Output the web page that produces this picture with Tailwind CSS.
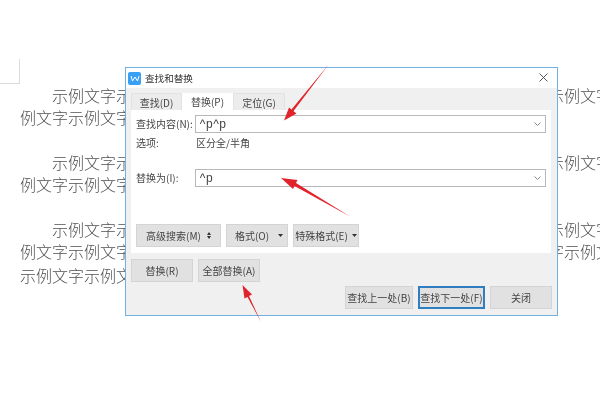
<!DOCTYPE html>
<html lang="zh">
<head>
<meta charset="utf-8">
<script src="https://cdn.jsdelivr.net/npm/@tailwindcss/browser@4"></script>
</head>
<body>
<div class="relative w-[600px] h-[408px] overflow-hidden bg-white font-['Noto_Sans_CJK_SC','Liberation_Sans',sans-serif] blur-[0.3px]">
  <!-- document page -->
  <div class="w-[20px] h-[25px] mt-[59px] border-r border-b border-[#dcdcdc]"></div>
  <div class="pl-[20px] text-[16px] leading-[22px] text-[#505050] font-light whitespace-nowrap">
    <div class="flex">
      <div class="w-[105px] overflow-hidden pl-[32px]">示例文字示</div>
      <div class="ml-[433px] w-[42px] overflow-hidden"><div class="-ml-[10px]">示例文字</div></div>
    </div>
    <div class="flex">
      <div class="w-[105px] overflow-hidden">例文字示例文字</div>
    </div>
    <div class="flex mt-[23px]">
      <div class="w-[105px] overflow-hidden pl-[32px]">示例文字示</div>
      <div class="ml-[433px] w-[42px] overflow-hidden"><div class="-ml-[10px]">示例文字</div></div>
    </div>
    <div class="flex">
      <div class="w-[105px] overflow-hidden">例文字示例文字</div>
    </div>
    <div class="flex mt-[23px]">
      <div class="w-[105px] overflow-hidden pl-[32px]">示例文字示</div>
      <div class="ml-[433px] w-[42px] overflow-hidden"><div class="-ml-[10px]">示例文字</div></div>
    </div>
    <div class="flex">
      <div class="w-[105px] overflow-hidden">例文字示例文字</div>
      <div class="ml-[433px] w-[42px] overflow-hidden"><div class="-ml-[10px]">字示例文</div></div>
    </div>
    <div class="flex mt-[2px]">
      <div class="w-[105px] overflow-hidden">示例文字示例文字</div>
    </div>
  </div>

  <!-- dialog -->
  <div class="absolute left-[125px] top-[67px] w-[433px] h-[249px] border border-[#6fb1e2] bg-white flex flex-col text-[10px] text-[#444]">
    <div class="h-[20px] shrink-0 flex items-center pl-[2px] pr-[9px]">
      <div class="w-[13px] h-[13px] rounded-[2px] bg-[#3aa0f5] flex items-center justify-center">
        <svg width="10" height="7" viewBox="0 0 10 7" fill="none" stroke="#fff" stroke-width="1"><path d="M1 1l1.5 5L5 2l2.5 4L9 1"/></svg>
      </div>
      <span class="ml-[4px] text-[#333] text-[9.6px]">查找和替换</span>
      <svg class="ml-auto mb-[2px]" width="9" height="9" viewBox="0 0 9 9" stroke="#444" stroke-width="0.9"><path d="M0.5 0.5l8 8M8.5 0.5l-8 8"/></svg>
    </div>
    <div class="flex-1 bg-[#f0f0f0] px-[5px] flex flex-col">
      <div class="flex pt-[5px] h-[22px] shrink-0">
        <div class="w-[51px] bg-[#ececec] border border-b-0 border-[#e2e2e2] flex items-center justify-center">查找(D)</div>
        <div class="w-[51px] bg-white flex items-center justify-center">替换(P)</div>
        <div class="w-[52px] bg-[#ececec] border border-b-0 border-[#e2e2e2] flex items-center justify-center">定位(G)</div>
      </div>
      <div class="h-[143px] w-[420px] shrink-0 bg-white px-[5px] pt-[5px] flex flex-col">
        <div class="flex items-center h-[18px]">
          <span class="w-[59px] pb-[2px]">查找内容(N):</span>
          <div class="w-[352px] h-[18px] border border-[#b8b8b8] flex items-center px-[4px] text-[12px] tracking-[0.5px] font-['Liberation_Sans',sans-serif]">
            <span>^p^p</span>
            <svg class="ml-auto" width="7" height="4" viewBox="0 0 7 4" fill="none" stroke="#888"><path d="M0.5 0.5L3.5 3.5L6.5 0.5"/></svg>
          </div>
        </div>
        <div class="flex items-center h-[16px] mt-[2px] pb-[2px]">
          <span class="w-[60px]">选项:</span>
          <span>区分全/半角</span>
        </div>
        <div class="flex items-center h-[18px] mt-[18px]">
          <span class="w-[59px] pb-[1px]">替换为(I):</span>
          <div class="w-[352px] h-[18px] border border-[#b8b8b8] flex items-center px-[4px] text-[12px] tracking-[0.5px] font-['Liberation_Sans',sans-serif]">
            <span>^p</span>
            <svg class="ml-auto" width="7" height="4" viewBox="0 0 7 4" fill="none" stroke="#888"><path d="M0.5 0.5L3.5 3.5L6.5 0.5"/></svg>
          </div>
        </div>
        <div class="flex gap-[5px] mt-[37px]">
          <div class="w-[85px] h-[23px] pb-[1px] bg-[#e1e1e1] border border-[#d4d4d4] flex items-center justify-center gap-[6px]">高级搜索(M)<svg width="4" height="7" viewBox="0 0 4 7" fill="#333"><path d="M0 3h4L2 0zM0 4h4L2 7z"/></svg></div>
          <div class="w-[62px] h-[23px] pb-[1px] bg-[#e1e1e1] border border-[#d4d4d4] flex items-center justify-center gap-[9px] pl-[4px]">格式(O)<svg width="5" height="3" viewBox="0 0 5 3"><path d="M0 0h5L2.5 3z" fill="#333"/></svg></div>
          <div class="w-[66px] h-[23px] pb-[1px] bg-[#e1e1e1] border border-[#d4d4d4] flex items-center justify-center gap-[4px]">特殊格式(E)<svg width="5" height="3" viewBox="0 0 5 3"><path d="M0 0h5L2.5 3z" fill="#333"/></svg></div>
        </div>
      </div>
      <div class="flex gap-[5px] mt-[6px]">
        <div class="w-[62px] h-[23px] bg-[#e1e1e1] border border-[#d4d4d4] flex items-center justify-center">替换(R)</div>
        <div class="w-[62px] h-[23px] bg-[#e1e1e1] border border-[#d4d4d4] flex items-center justify-center">全部替换(A)</div>
      </div>
      <div class="flex justify-end gap-[5px] mt-[4px] w-[421px]">
        <div class="w-[68px] h-[23px] bg-[#e1e1e1] border border-[#d4d4d4] flex items-center justify-center">查找上一处(B)</div>
        <div class="w-[67px] h-[23px] bg-[#e1e1e1] border-2 border-[#2f7fc0] flex items-center justify-center">查找下一处(F)</div>
        <div class="w-[62px] h-[23px] bg-[#e1e1e1] border border-[#d4d4d4] flex items-center justify-center">关闭</div>
      </div>
    </div>
  </div>

  <!-- red arrows -->
  <svg class="absolute left-0 top-0 pointer-events-none" width="600" height="408" viewBox="0 0 600 408" fill="#e1232c">
    <polygon points="329,64 293.5,111 296.5,113.5 284,120.5 289,107.5 291.5,109.5"/>
    <polygon points="350,216.5 294.5,186 293,189 281,178 297.5,180 296,183"/>
    <polygon points="261,322 247.5,297 244.5,298.5 242.5,285 252,294.5 249,296"/>
  </svg>
</div>
</body>
</html>
